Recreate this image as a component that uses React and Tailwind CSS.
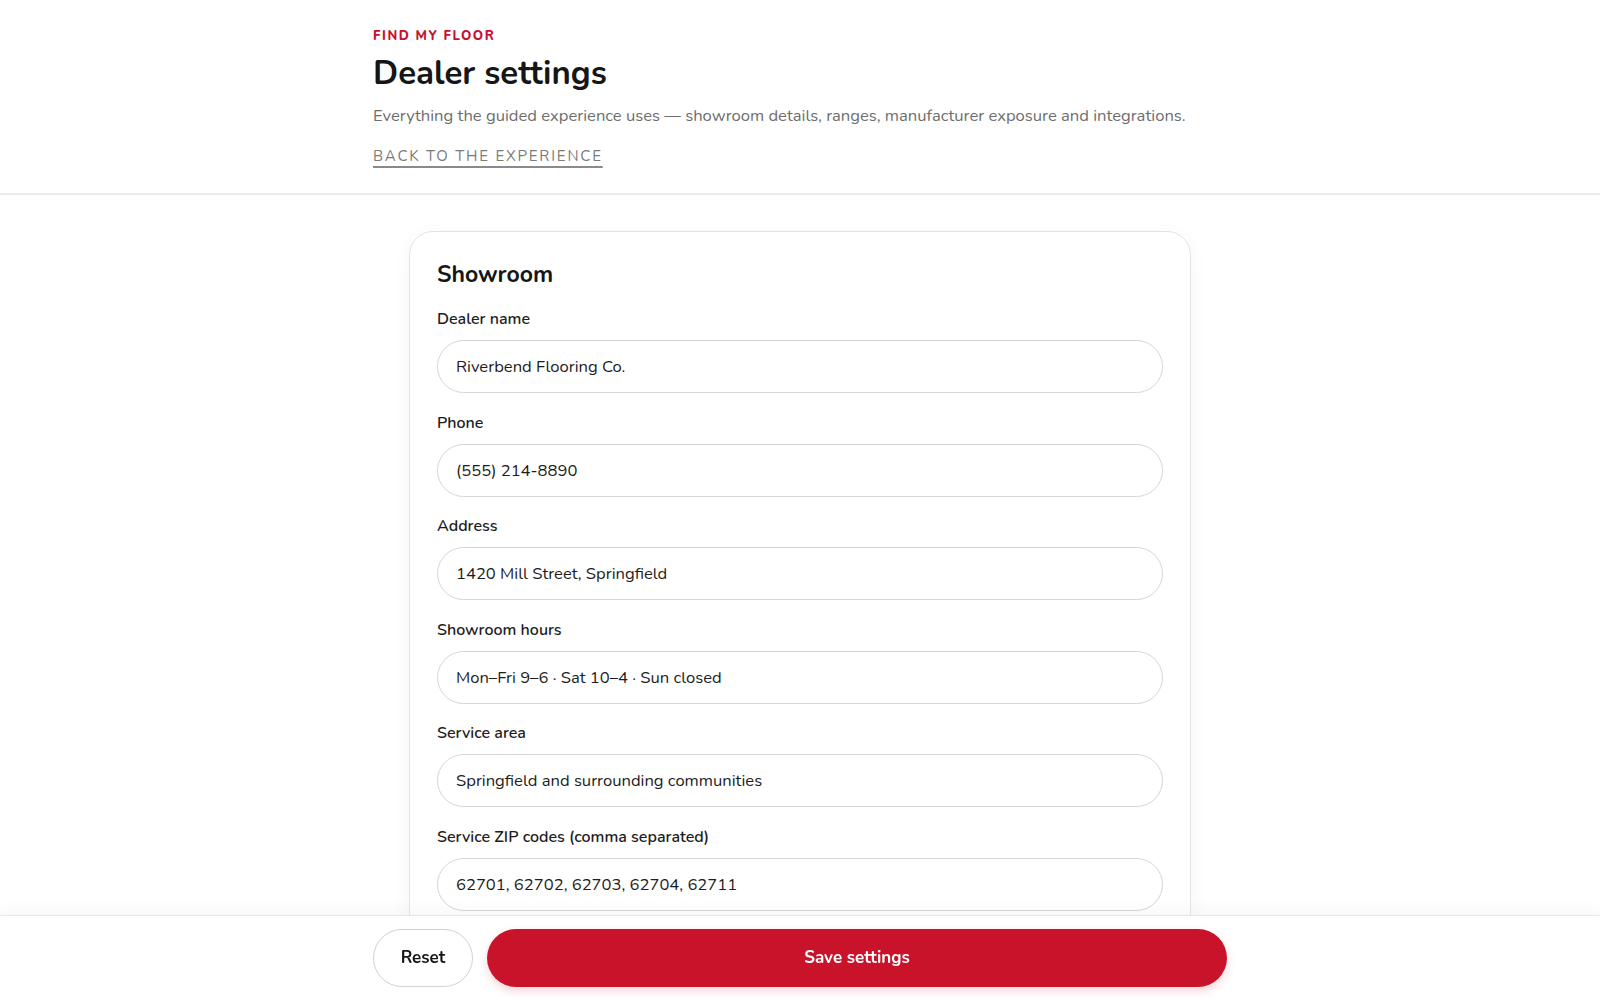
import React from "react";

const fields = [
  ["Dealer name", "Riverbend Flooring Co."],
  ["Phone", "(555) 214-8890"],
  ["Address", "1420 Mill Street, Springfield"],
  ["Showroom hours", "Mon\u2013Fri 9\u20136 \u00b7 Sat 10\u20134 \u00b7 Sun closed"],
  ["Service area", "Springfield and surrounding communities"],
  ["Service ZIP codes (comma separated)", "62701, 62702, 62703, 62704, 62711"],
];

export default function App() {
  return (
    <div
      className="min-h-screen bg-white text-[#1a1a1a]"
      style={{ fontFamily: "Nunito, 'Nunito Sans', Lato, 'Open Sans', sans-serif" }}
    >
      <header className="bg-white border-b-2 border-[#ececec]">
        <div className="w-[854px] mx-auto pt-[28px] pb-[25px]">
          <div className="text-[13px] leading-[16px] font-extrabold tracking-[0.12em] text-[#c8102e]">
            FIND MY FLOOR
          </div>
          <h1 className="mt-[10px] text-[33px] leading-[40px] font-bold text-[#161616]">
            Dealer settings
          </h1>
          <p className="mt-[10px] text-[16.6px] leading-[24px] text-[#6e6e6e]">
            Everything the guided experience uses — showroom details, ranges, manufacturer exposure and integrations.
          </p>
          <a
            href="#"
            className="inline-block mt-[18px] text-[15px] leading-[20px] tracking-[0.12em] text-[#7a7a7a] underline decoration-[#8a8a8a] decoration-2 underline-offset-[5px]"
          >
            BACK TO THE EXPERIENCE
          </a>
        </div>
      </header>

      <main className="pt-[36px] pb-[120px]">
        <section className="w-[782px] mx-auto bg-white border border-[#e4e4e4] rounded-[24px] shadow-[0_4px_20px_rgba(0,0,0,0.04)] px-[27px] pt-[29px] pb-[28px]">
          <h2 className="text-[23px] leading-[28px] font-bold text-[#161616]">Showroom</h2>
          <div className="mt-[18px] flex flex-col gap-[17.5px]">
            {fields.map(([label, value]) => (
              <div key={label}>
                <label className="block text-[16px] leading-[24px] font-semibold text-[#1d1d1d]">
                  {label}
                </label>
                <input
                  defaultValue={value}
                  className="mt-[9px] w-full h-[53px] rounded-full border border-[#d6d6d6] bg-white px-[18px] text-[16.6px] text-[#1d1d1d] outline-none"
                  style={{ fontFamily: "inherit" }}
                />
              </div>
            ))}
          </div>
        </section>
      </main>

      <footer className="fixed bottom-0 left-0 right-0 bg-white border-t border-[#e6e6e6] shadow-[0_-4px_16px_rgba(0,0,0,0.04)]">
        <div className="w-[854px] mx-auto pt-[13px] pb-[13px] flex gap-[14px]">
          <button className="w-[100px] h-[58px] rounded-full border border-[#d2d2d2] bg-white text-[17px] font-bold text-[#161616]">
            Reset
          </button>
          <button className="flex-1 h-[58px] rounded-full bg-[#c8132a] text-white text-[17px] font-bold shadow-[0_4px_10px_rgba(200,19,42,0.18)]">
            Save settings
          </button>
        </div>
      </footer>
    </div>
  );
}
